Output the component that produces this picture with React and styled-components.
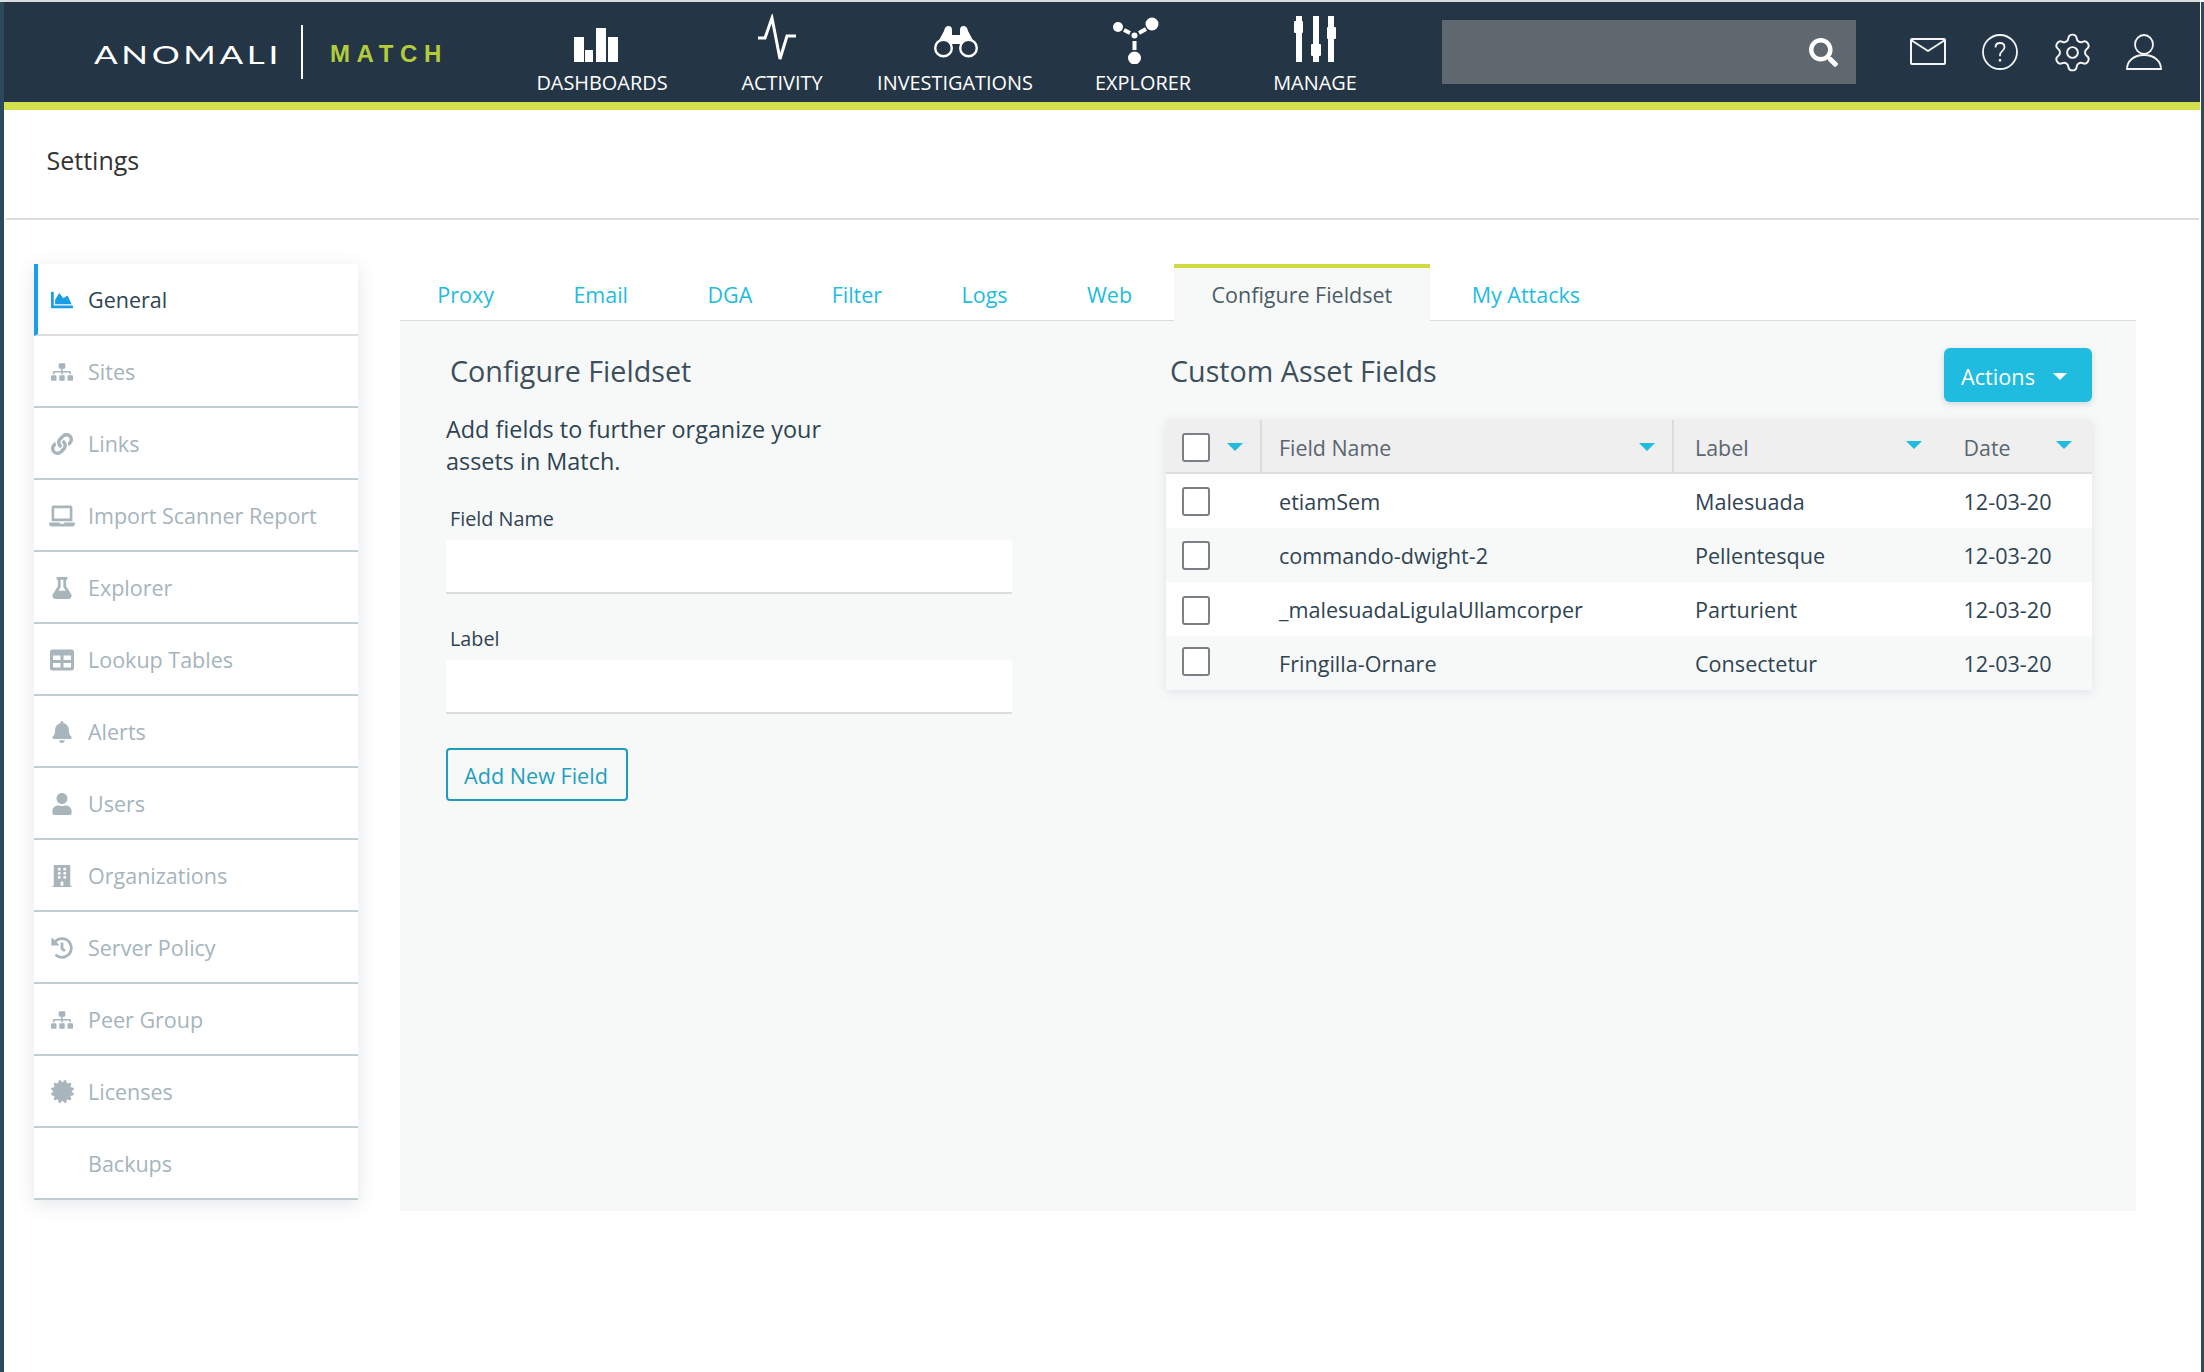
import React from 'react';
import styled, { createGlobalStyle } from 'styled-components';
import {
  FaChartArea, FaSitemap, FaLink, FaLaptop, FaFlask, FaTable, FaBell, FaUser,
  FaBuilding, FaHistory, FaCertificate, FaSearch,
} from 'react-icons/fa';
import { Settings as GearIcon } from 'lucide-react';

const GlobalStyle = createGlobalStyle`
  html, body { margin: 0; padding: 0; background: #fff; }
  body { font-family: "Open Sans", "Liberation Sans", sans-serif; color: #2f4452; }
  * { box-sizing: border-box; }
`;

const TopLine = styled.div`
  height: 2px;
  width: 2200px;
  background: #dcdcdc;
`;

const Shell = styled.div`
  width: 2204px;
  min-height: 1370px;
  border-left: 4px solid #2b4a5c;
  border-right: 3px solid #2b4a5c;
  background: #fff;
`;

const Header = styled.header`
  display: flex;
  align-items: flex-start;
  height: 108px;
  margin-right: 1px;
  background: #243646;
  border-bottom: 8px solid #d5e04f;
`;

const Logo = styled.div`
  display: flex;
  align-items: center;
  width: 508px;
  height: 100px;
  padding: 4px 0 0 90px;
`;

const LogoName = styled.span`
  width: 207px;
  font-family: Lato, sans-serif;
  font-weight: 400;
  font-size: 25px;
  letter-spacing: 2.6px;
  color: #fff;
  transform: scaleX(1.4);
  transform-origin: left center;
`;

const LogoDivider = styled.span`
  width: 2px;
  height: 54px;
  margin-top: -4px;
  background: #fff;
`;

const LogoProduct = styled.span`
  margin-left: 27px;
  font-family: "Liberation Sans", sans-serif;
  font-weight: 700;
  font-size: 24px;
  letter-spacing: 6.6px;
  color: #b4cc3c;
`;

const NavList = styled.nav`
  display: flex;
`;

const NavItem = styled.a`
  display: flex;
  flex-direction: column;
  align-items: center;
  width: ${p => p.$width}px;
  padding-top: 12px;
  color: #fff;
  font-size: 19.9px;
  line-height: 28px;
  svg { display: block; height: 50px; width: 64px; fill: #fff; margin-bottom: 5px; }
`;

const SearchBox = styled.div`
  display: flex;
  align-items: center;
  justify-content: flex-end;
  width: 414px;
  height: 64px;
  margin: 18px 0 0 60px;
  padding-right: 18px;
  background: #5f686f;
  color: #fff;
`;

const UserTools = styled.div`
  display: flex;
  gap: 36px;
  margin: 32px 0 0 54px;
`;

const ToolIcon = styled.span`
  display: flex;
  align-items: center;
  justify-content: center;
  width: 36px;
  height: 36px;
  color: #f2f4f5;
  svg { flex-shrink: 0; }
`;

const PageTitleBar = styled.div`
  display: flex;
  align-items: center;
  height: 110px;
  margin: 0 2px;
  padding: 0 0 9px 40.5px;
  border-bottom: 2px solid #dcdcdc;
  font-size: 25px;
  color: #333;
`;

const Content = styled.div`
  display: flex;
  align-items: flex-start;
  gap: 42px;
  padding: 44px 0 0 30px;
`;

const SideMenu = styled.ul`
  width: 324px;
  margin: 0;
  padding: 0;
  list-style: none;
  background: #fff;
  box-shadow: 0 4px 18px rgba(60, 80, 90, 0.14);
`;

const SideItem = styled.li`
  display: flex;
  align-items: center;
  height: 72px;
  padding: 1px 0 0 ${p => (p.$active ? 12 : 16)}px;
  border-left: ${p => (p.$active ? '4px solid #1b9ee6' : 'none')};
  border-bottom: 2px solid ${p => (p.$active ? '#dcdede' : '#c0cdd2')};
  font-size: 21.5px;
  color: ${p => (p.$active ? '#2d4454' : '#a5b4bd')};
`;

const SideIcon = styled.span`
  display: flex;
  align-items: center;
  justify-content: center;
  width: 24px;
  margin-right: 14px;
  color: ${p => (p.$active ? '#1b9ee6' : '#a8b5bd')};
  svg { flex-shrink: 0; }
`;

const MainColumn = styled.main`
  width: 1736px;
`;

const TabBar = styled.div`
  display: flex;
  align-items: flex-end;
  gap: 4.8px;
  height: 57px;
  border-bottom: 1px solid #dcdede;
`;

const Tab = styled.a`
  height: 57px;
  margin-bottom: -1px;
  padding: ${p => (p.$active ? 13 : 17)}px 37.3px 0;
  border-top: ${p => (p.$active ? '4px solid #cfdb42' : 'none')};
  background: ${p => (p.$active ? '#f7f9f9' : 'transparent')};
  font-size: 21.5px;
  line-height: 28px;
  color: ${p => (p.$active ? '#4a5b66' : '#1fbce0')};
`;

const Panel = styled.section`
  display: flex;
  gap: 154px;
  height: 890px;
  padding: 27px 0 0 46px;
  background: #f7f9f9;
`;

const FormColumn = styled.div`
  width: 566px;
`;

const SectionTitle = styled.h2`
  margin: 0;
  padding-left: 4px;
  height: 46px;
  font-size: 28.7px;
  font-weight: 400;
  line-height: 46px;
  color: #3d4f5c;
`;

const Intro = styled.p`
  width: 400px;
  margin: 19px 0 28px;
  font-size: 23.4px;
  line-height: 32px;
  color: #2f4452;
`;

const FieldLabel = styled.label`
  display: block;
  margin-bottom: 7px;
  padding-left: 4px;
  font-size: 19.8px;
  line-height: 28px;
  color: #2f4452;
`;

const TextInput = styled.input`
  display: block;
  width: 566px;
  height: 54px;
  margin-bottom: 31px;
  padding: 0 12px;
  border: none;
  border-bottom: 2px solid #dcdede;
  background: #fff;
  outline: none;
`;

const OutlineButton = styled.button`
  display: block;
  width: 182px;
  height: 53px;
  margin-top: 34px;
  padding: 1px 2px 0 0;
  border: 2px solid #1e9cbd;
  border-radius: 4px;
  background: transparent;
  font-family: inherit;
  font-size: 21.6px;
  color: #1f9fc0;
`;

const TableColumn = styled.div`
  width: 926px;
`;

const TableHead = styled.div`
  display: flex;
  justify-content: space-between;
  align-items: flex-start;
  height: 54px;
  margin-bottom: 18px;
`;

const ActionsButton = styled.button`
  display: flex;
  align-items: center;
  justify-content: space-between;
  width: 148px;
  height: 54px;
  padding: 2px 25px 0 17px;
  border: none;
  border-radius: 6px;
  background: #1fbce0;
  box-shadow: 0 2px 6px rgba(40, 70, 90, 0.2);
  font-family: inherit;
  font-size: 21.7px;
  color: #fff;
`;

const Caret = styled.span`
  flex-shrink: 0;
  width: 0;
  height: 0;
  margin-top: ${p => p.$up ? -p.$up : 0}px;
  border-left: ${p => p.$size}px solid transparent;
  border-right: ${p => p.$size}px solid transparent;
  border-top: ${p => p.$size}px solid ${p => p.$color};
`;

const AssetTable = styled.div`
  box-shadow: 0 2px 10px rgba(60, 80, 90, 0.13);
`;

const TableRow = styled.div`
  display: grid;
  grid-template-columns: 96px 412px 276px 142px;
  align-items: center;
  height: 54px;
  background: ${p => (p.$shaded ? '#f7f9f9' : '#fff')};
`;

const HeaderRow = styled(TableRow)`
  align-items: stretch;
  background: #efefef;
  border-bottom: 2px solid #dcdede;
`;

const HeaderCell = styled.div`
  display: flex;
  align-items: center;
  justify-content: space-between;
  padding: 2px ${p => p.$right}px 0 ${p => p.$left}px;
  border-right: ${p => (p.$divider ? '2px solid #dcdcdc' : 'none')};
  font-size: 21.4px;
  color: #5a6670;
`;

const Cell = styled.div`
  padding: 1px 0 0 ${p => p.$left}px;
  font-size: 21.6px;
  color: #2f4452;
  white-space: nowrap;
`;

const CheckBox = styled.span`
  display: block;
  width: 28px;
  height: 29px;
  margin: ${p => p.$up || 0}px 0 0 16px;
  border: 2px solid #7b8086;
  border-radius: 3px;
  background: #fff;
`;

const HeaderCheckBox = styled(CheckBox)`
  margin-left: 0;
`;

const menuItems = [
  ['General', FaChartArea, 22],
  ['Sites', FaSitemap, 22],
  ['Links', FaLink, 22],
  ['Import Scanner Report', FaLaptop, 26],
  ['Explorer', FaFlask, 22],
  ['Lookup Tables', FaTable, 24],
  ['Alerts', FaBell, 22],
  ['Users', FaUser, 22],
  ['Organizations', FaBuilding, 22],
  ['Server Policy', FaHistory, 22],
  ['Peer Group', FaSitemap, 22],
  ['Licenses', FaCertificate, 23],
  ['Backups', null, 0],
];

const tabs = ['Proxy', 'Email', 'DGA', 'Filter', 'Logs', 'Web'];

const rows = [
  ['etiamSem', 'Malesuada', 0],
  ['commando-dwight-2', 'Pellentesque', 0],
  ['_malesuadaLigulaUllamcorper', 'Parturient', 2],
  ['Fringilla-Ornare', 'Consectetur', -3],
];

const DashboardsIcon = () => (
  <svg viewBox="0 0 64 50">
    <rect x="4" y="23" width="10" height="25" />
    <rect x="15" y="36" width="8" height="12" />
    <rect x="26" y="14" width="10" height="34" />
    <rect x="38" y="23" width="10" height="25" />
  </svg>
);

const ActivityIcon = () => (
  <svg viewBox="0 0 64 50">
    <path d="M8 24h7l7-20 8 41 7-23h9" fill="none" stroke="#fff" strokeWidth="3" />
  </svg>
);

const BinocularsIcon = () => (
  <svg viewBox="0 0 64 50">
    <path d="M14 30 L21 17 Q22 12 25.5 12 Q29 12 29 16 L29 21 H37 L37 16 Q37 12 40.5 12 Q44 12 45 17 L52 30 Z" />
    <circle cx="20.5" cy="34" r="8.3" fill="#243646" stroke="#fff" strokeWidth="2.4" />
    <circle cx="45.5" cy="34" r="8.3" fill="#243646" stroke="#fff" strokeWidth="2.4" />
    <circle cx="33" cy="33" r="2.6" fill="#243646" />
  </svg>
);

const ExplorerIcon = () => (
  <svg viewBox="0 0 64 50">
    <circle cx="7" cy="13" r="5" />
    <circle cx="41" cy="10" r="6.5" />
    <circle cx="23.5" cy="21.5" r="3" />
    <circle cx="23.5" cy="44" r="6.5" />
    <path d="M13 16l6 3M28 19l7-4M23.5 27v9" stroke="#fff" strokeWidth="4" />
  </svg>
);

const ManageIcon = () => (
  <svg viewBox="0 0 64 50">
    <rect x="13" y="2" width="6" height="46" />
    <rect x="11" y="7" width="9" height="12" rx="1" />
    <rect x="30" y="2" width="6" height="46" />
    <rect x="28" y="30" width="10" height="12" rx="1" />
    <rect x="45" y="2" width="6" height="46" />
    <rect x="44" y="13" width="9" height="12" rx="1" />
  </svg>
);

const MailIcon = () => (
  <svg width="36" height="28" viewBox="0 0 36 28" fill="none" stroke="currentColor" strokeWidth="2" strokeLinejoin="round">
    <rect x="1" y="1" width="34" height="25" rx="1" />
    <path d="M1 2l17 11L35 2" />
  </svg>
);

const HelpIcon = () => (
  <svg width="36" height="36" viewBox="0 0 36 36" fill="none" stroke="currentColor" strokeWidth="1.8">
    <circle cx="18" cy="18" r="17" />
    <path d="M13.5 13.5c0-3 2-4.5 4.5-4.5s4.5 1.6 4.5 4.2c0 3.6-4.5 3.8-4.5 8v1" />
    <path d="M18 25v2.5" strokeWidth="2.4" />
  </svg>
);

const PersonIcon = () => (
  <svg width="36" height="36" viewBox="0 0 36 36" fill="none" stroke="currentColor" strokeWidth="1.8">
    <ellipse cx="18" cy="10.5" rx="9" ry="9.5" />
    <path d="M1 35c0-8 7-14 17-14s17 6 17 14z" />
  </svg>
);

const navItems = [
  ['DASHBOARDS', DashboardsIcon, 180],
  ['ACTIVITY', ActivityIcon, 180],
  ['INVESTIGATIONS', BinocularsIcon, 166],
  ['EXPLORER', ExplorerIcon, 210],
  ['MANAGE', ManageIcon, 134],
];

export default function App() {
  return (
    <>
      <GlobalStyle />
      <TopLine />
      <Shell>
        <Header>
          <Logo>
            <LogoName>ANOMALI</LogoName>
            <LogoDivider />
            <LogoProduct>MATCH</LogoProduct>
          </Logo>
          <NavList>
            {navItems.map(([label, Icon, width]) => (
              <NavItem key={label} $width={width}>
                <Icon />
                {label}
              </NavItem>
            ))}
          </NavList>
          <SearchBox><FaSearch size={29} /></SearchBox>
          <UserTools>
            <ToolIcon><MailIcon /></ToolIcon>
            <ToolIcon><HelpIcon /></ToolIcon>
            <ToolIcon><GearIcon size={43} strokeWidth={1.1} /></ToolIcon>
            <ToolIcon><PersonIcon /></ToolIcon>
          </UserTools>
        </Header>

        <PageTitleBar>Settings</PageTitleBar>

        <Content>
          <SideMenu>
            {menuItems.map(([label, Icon, size], i) => (
              <SideItem key={label} $active={i === 0}>
                <SideIcon $active={i === 0}>{Icon && <Icon size={size} />}</SideIcon>
                {label}
              </SideItem>
            ))}
          </SideMenu>

          <MainColumn>
            <TabBar>
              {tabs.map(label => (
                <Tab key={label}>{label}</Tab>
              ))}
              <Tab $active>Configure Fieldset</Tab>
              <Tab>My Attacks</Tab>
            </TabBar>

            <Panel>
              <FormColumn>
                <SectionTitle>Configure Fieldset</SectionTitle>
                <Intro>Add fields to further organize your assets in Match.</Intro>
                <FieldLabel>Field Name</FieldLabel>
                <TextInput />
                <FieldLabel>Label</FieldLabel>
                <TextInput />
                <OutlineButton>Add New Field</OutlineButton>
              </FormColumn>

              <TableColumn>
                <TableHead>
                  <SectionTitle>Custom Asset Fields</SectionTitle>
                  <ActionsButton>Actions<Caret $size={7} $color="#fff" /></ActionsButton>
                </TableHead>
                <AssetTable>
                  <HeaderRow>
                    <HeaderCell $left={16} $right={17} $divider>
                      <HeaderCheckBox />
                      <Caret $size={8} $color="#1fbce0" />
                    </HeaderCell>
                    <HeaderCell $left={17} $right={17} $divider>
                      Field Name<Caret $size={8} $color="#1fbce0" />
                    </HeaderCell>
                    <HeaderCell $left={21} $right={28}>
                      Label<Caret $size={8} $color="#1fbce0" $up={4} />
                    </HeaderCell>
                    <HeaderCell $left={13.5} $right={20}>
                      Date<Caret $size={8} $color="#1fbce0" $up={4} />
                    </HeaderCell>
                  </HeaderRow>
                  {rows.map(([name, label, up], i) => (
                    <TableRow key={name} $shaded={i % 2 === 1}>
                      <CheckBox $up={up} />
                      <Cell $left={17}>{name}</Cell>
                      <Cell $left={21}>{label}</Cell>
                      <Cell $left={13.5}>12-03-20</Cell>
                    </TableRow>
                  ))}
                </AssetTable>
              </TableColumn>
            </Panel>
          </MainColumn>
        </Content>
      </Shell>
    </>
  );
}
